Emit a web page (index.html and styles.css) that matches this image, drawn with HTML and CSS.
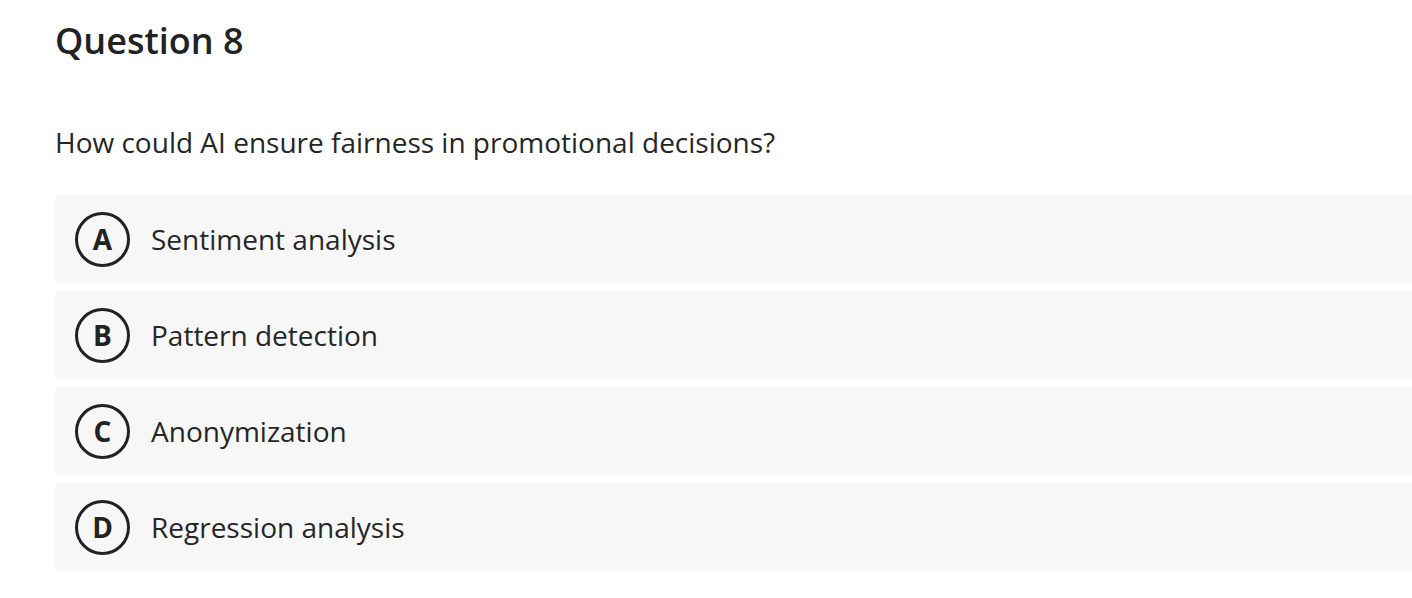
FILE: index.html
```html
<!DOCTYPE html>
<html>
<head>
<meta charset="utf-8">
<link rel="stylesheet" href="styles.css">
</head>
<body>
<main class="quiz">
  <h1 class="title">Question 8</h1>
  <p class="question">How could AI ensure fairness in promotional decisions?</p>
  <ul class="options">
    <li class="option"><span class="badge">A</span><span class="label">Sentiment analysis</span></li>
    <li class="option"><span class="badge">B</span><span class="label">Pattern detection</span></li>
    <li class="option"><span class="badge">C</span><span class="label">Anonymization</span></li>
    <li class="option"><span class="badge">D</span><span class="label">Regression analysis</span></li>
  </ul>
</main>
</body>
</html>
```
FILE: styles.css
```css
html, body {
  margin: 0;
  padding: 0;
  background: #ffffff;
}
body {
  font-family: "Open Sans", "Noto Sans", sans-serif;
  color: #222222;
}
.quiz {
  padding: 18px 0 0 55px;
}
.title {
  margin: 0;
  font-size: 36px;
  font-weight: 600;
  line-height: 46px;
  color: #222;
}
.question {
  margin: 60px 0 0 0;
  font-size: 28px;
  line-height: 36px;
  color: #262626;
}
.options {
  list-style: none;
  margin: 35px 0 0 0;
  padding: 0;
  display: flex;
  flex-direction: column;
  gap: 8px;
}
.option {
  height: 88px;
  background: #f7f7f7;
  border-radius: 4px 0 0 4px;
  display: flex;
  align-items: center;
  padding-left: 20px;
  gap: 21px;
}
.badge {
  box-sizing: border-box;
  width: 55px;
  height: 55px;
  border: 3px solid #222;
  border-radius: 50%;
  display: flex;
  align-items: center;
  justify-content: center;
  font-weight: 700;
  font-size: 28px;
  line-height: 1;
  color: #222;
}
.label {
  font-size: 28px;
  color: #262626;
}
```
